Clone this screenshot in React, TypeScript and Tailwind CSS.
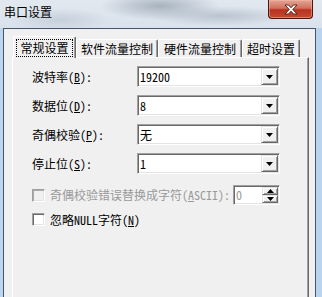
import React from "react";

const sunken =
  "border border-t-[#a0a0a0] border-l-[#a0a0a0] border-b-white border-r-white shadow-[inset_1px_1px_0_#696969,inset_-1px_-1px_0_#e3e3e3]";
const raised =
  "border border-t-[#e3e3e3] border-l-[#e3e3e3] border-b-[#696969] border-r-[#696969] shadow-[inset_1px_1px_0_#ffffff,inset_-1px_-1px_0_#a0a0a0] bg-[#f0f0f0]";

function DownTri() {
  return (
    <svg width="7" height="4" viewBox="0 0 7 4">
      <path d="M0 0H7L3.5 4Z" fill="#000" />
    </svg>
  );
}

function Combo({ value }: { value: string }) {
  return (
    <div className={`h-[21px] w-[143px] flex items-stretch bg-white ${sunken}`}>
      <div className="flex-1 flex items-center pl-[2px] pt-[1px]">{value}</div>
      <div className={`w-[17px] my-[1px] mr-[1px] flex items-center justify-center ${raised}`}>
        <DownTri />
      </div>
    </div>
  );
}

function Spin() {
  return (
    <div className={`h-[20px] w-[47px] flex items-stretch bg-white ${sunken}`}>
      <div className="flex-1 flex items-center pl-[2px] text-[#9a9a9a]">0</div>
      <div className="w-[16px] my-[1px] mr-[1px] flex flex-col">
        <div className={`flex-1 flex items-center justify-center ${raised}`}>
          <svg width="7" height="4" viewBox="0 0 7 4">
            <path d="M0 4H7L3.5 0Z" fill="#000" />
          </svg>
        </div>
        <div className={`flex-1 flex items-center justify-center ${raised}`}>
          <DownTri />
        </div>
      </div>
    </div>
  );
}

function Checkbox({ disabled }: { disabled?: boolean }) {
  return (
    <div
      className={`w-[13px] h-[13px] shrink-0 border ${
        disabled
          ? "bg-[#f0f0f0] border-t-[#a0a0a0] border-l-[#a0a0a0] border-b-white border-r-white shadow-[inset_1px_1px_0_#a9a9a9,inset_-1px_-1px_0_#e3e3e3]"
          : "bg-white border-t-[#a0a0a0] border-l-[#a0a0a0] border-b-white border-r-white shadow-[inset_1px_1px_0_#696969,inset_-1px_-1px_0_#e3e3e3]"
      }`}
    />
  );
}

function Tab({ label, width }: { label: string; width: string }) {
  return (
    <div
      className={`${width} h-[18px] flex items-start justify-center pt-[3px] border-t border-l border-r border-t-white border-l-white border-r-[#696969] shadow-[inset_-1px_0_0_#a0a0a0] rounded-t-[2px]`}
    >
      {label}
    </div>
  );
}

export default function App() {
  return (
    <div className="w-[322px] h-[297px] overflow-hidden flex flex-col bg-[#bad2ed] text-[12px] leading-[12px] text-black font-['Noto_Sans_Mono_CJK_SC','Noto_Sans_CJK_SC',sans-serif]">
      {/* title bar */}
      <div className="h-[28px] shrink-0 flex items-start justify-between bg-[radial-gradient(ellipse_60px_14px_at_160px_6px,#a7b3bf,transparent),radial-gradient(ellipse_50px_12px_at_60px_20px,#c6d0db,transparent),radial-gradient(ellipse_70px_10px_at_220px_16px,#b9c4cf,transparent),linear-gradient(to_bottom,#e2e8ef,#d9e2ec)]">
        <span className="ml-[4px] mt-[6px]">串口设置</span>
        <div className="mr-[9px] w-[45px] h-[19px] rounded-b-[4px] border border-t-0 border-[#4e140d] bg-[linear-gradient(to_bottom,#e3a696_0%,#d2705d_45%,#b7321e_55%,#c64a31_100%)] shadow-[inset_0_0_0_1px_rgba(255,190,175,0.45)] flex items-center justify-center">
          <svg width="14" height="11" viewBox="0 0 14 11">
            <path
              d="M1 1H4.5L7 3.8L9.5 1H13L8.8 5.5L13 10H9.5L7 7.2L4.5 10H1L5.2 5.5Z"
              fill="#fff"
              stroke="#4a1a12"
              strokeWidth="0.9"
              strokeLinejoin="round"
            />
          </svg>
        </div>
      </div>
      {/* body */}
      <div className="flex flex-1 min-h-0">
        <div className="w-[3px] shrink-0 bg-[#bdd5ef]" />
        <div className="w-[313px] shrink-0 border-l border-t border-r border-[#46566a] bg-[#f0f0f0] pl-[8px] pr-[6px] pt-[7px] flex flex-col">
          {/* tab strip */}
          <div className="h-[21px] flex items-end pl-[1px] relative z-10">
            <div className="w-[63px] h-[22px] -mb-[1px] bg-[#f0f0f0] flex items-start justify-center pt-[2px] px-[2px] border-t border-l border-r border-t-white border-l-white border-r-[#696969] shadow-[inset_-1px_0_0_#a0a0a0] rounded-t-[2px]">
              <div className="w-[59px] h-[18px] border border-dotted border-black flex items-center justify-center">
                常规设置
              </div>
            </div>
            <Tab label="软件流量控制" width="w-[82px]" />
            <Tab label="硬件流量控制" width="w-[84px]" />
            <Tab label="超时设置" width="w-[58px]" />
          </div>
          {/* panel */}
          <div className="flex-1 border-t border-l border-r border-t-white border-l-white border-r-[#696969] shadow-[inset_-1px_0_0_#a0a0a0] pt-[8px] pl-[19px]">
            <div className="grid grid-cols-[105px_143px] gap-y-[8px] items-center">
              <span>
                波特率(<u>B</u>):
              </span>
              <Combo value="19200" />
              <span>
                数据位(<u>D</u>):
              </span>
              <Combo value="8" />
              <span>
                奇偶校验(<u>P</u>):
              </span>
              <Combo value="无" />
              <span>
                停止位(<u>S</u>):
              </span>
              <Combo value="1" />
            </div>
            <div className="mt-[11px] w-[248px] h-[20px] flex items-center">
              <Checkbox disabled />
              <span className="ml-[5px] text-[#9a9a9a]">
                奇偶校验错误替换成字符(<u>A</u>SCII):
              </span>
              <div className="ml-auto">
                <Spin />
              </div>
            </div>
            <div className="mt-[8px] h-[13px] flex items-center">
              <Checkbox />
              <span className="ml-[5px]">
                忽略NULL字符(<u>N</u>)
              </span>
            </div>
          </div>
        </div>
        <div className="flex-1 bg-[#bad3ee]" />
      </div>
    </div>
  );
}
